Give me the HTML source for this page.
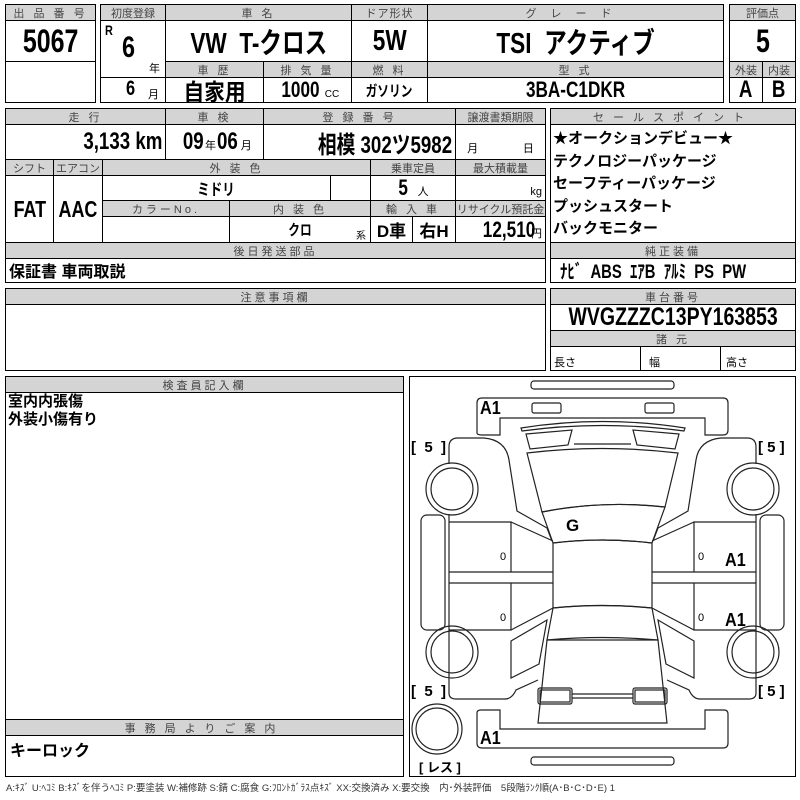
<!DOCTYPE html>
<html><head><meta charset="utf-8"><style>
*{margin:0;padding:0;box-sizing:border-box}
body{width:800px;height:800px;background:#fff;position:relative;overflow:hidden;font-family:"Liberation Sans","Noto Sans CJK JP",sans-serif;color:#000}
.c{position:absolute;border:1px solid #000;display:flex;align-items:center;justify-content:center;white-space:nowrap;overflow:visible}
.h{background:#d4d4d4;font-size:11px;color:#444;letter-spacing:3px;height:17px}
.b{font-weight:bold}
.s{display:inline-block;transform:scaleX(.78);transform-origin:center}
.sr{display:inline-block;transform:scaleX(.78);transform-origin:right}
.sl{display:inline-block;transform:scaleX(.78);transform-origin:left}
.t{position:absolute;white-space:nowrap;font-weight:bold}
</style></head><body>
<div class="c h" style="left:5px;top:4px;width:91px">出 品 番 号</div>
<div class="c b" style="left:5px;top:20px;width:91px;height:42px;font-size:32px"><span class="s">5067</span></div>
<div class="c" style="left:5px;top:61px;width:91px;height:42px"></div>
<div class="c h" style="left:100px;top:4px;width:66px;letter-spacing:0">初度登録</div>
<div class="c h" style="left:165px;top:4px;width:187px">車 名</div>
<div class="c h" style="left:351px;top:4px;width:77px;letter-spacing:1px">ドア形状</div>
<div class="c h" style="left:427px;top:4px;width:297px;letter-spacing:14px">グレード</div>
<div class="c" style="left:100px;top:20px;width:66px;height:58px"></div>
<div class="t" style="left:105px;top:22px;font-size:14px"><span class="sl">R</span></div>
<div class="t" style="left:122px;top:31px;font-size:30px"><span class="sl">6</span></div>
<div class="t" style="left:149px;top:60px;font-size:11px;font-weight:normal">年</div>
<div class="c" style="left:100px;top:77px;width:66px;height:26px"></div>
<div class="t" style="left:126px;top:77px;font-size:21px"><span class="sl">6</span></div>
<div class="t" style="left:148px;top:86px;font-size:11px;font-weight:normal">月</div>
<div class="c b" style="left:165px;top:20px;width:187px;height:42px;font-size:29px"><span class="s">VW&nbsp;&nbsp;T-クロス</span></div>
<div class="c b" style="left:351px;top:20px;width:77px;height:42px;font-size:29px"><span class="s">5W</span></div>
<div class="c b" style="left:427px;top:20px;width:297px;height:42px;font-size:29px"><span class="s">TSI&nbsp;&nbsp;アクティブ</span></div>
<div class="c h" style="left:165px;top:61px;width:99px">車 歴</div>
<div class="c h" style="left:263px;top:61px;width:89px">排 気 量</div>
<div class="c h" style="left:351px;top:61px;width:77px">燃 料</div>
<div class="c h" style="left:427px;top:61px;width:297px">型 式</div>
<div class="c b" style="left:165px;top:77px;width:99px;height:26px;font-size:23px"><span class="s" style="transform:scaleX(.9)">自家用</span></div>
<div class="c b" style="left:263px;top:77px;width:89px;height:26px;font-size:22px"><span class="s">1000</span><span style="font-size:10px;font-weight:normal;margin-top:8px">CC</span></div>
<div class="c b" style="left:351px;top:77px;width:77px;height:26px;font-size:15px"><span class="s">ガソリン</span></div>
<div class="c b" style="left:427px;top:77px;width:297px;height:26px;font-size:22px"><span class="s">3BA-C1DKR</span></div>
<div class="c h" style="left:729px;top:4px;width:67px;letter-spacing:0">評価点</div>
<div class="c b" style="left:729px;top:20px;width:67px;height:42px;font-size:32px"><span class="s">5</span></div>
<div class="c h" style="left:729px;top:61px;width:34px;letter-spacing:0">外装</div>
<div class="c h" style="left:762px;top:61px;width:34px;letter-spacing:0">内装</div>
<div class="c b" style="left:729px;top:77px;width:34px;height:26px;font-size:24px"><span class="s">A</span></div>
<div class="c b" style="left:762px;top:77px;width:34px;height:26px;font-size:24px"><span class="s">B</span></div>
<div class="c h" style="left:5px;top:108px;width:161px">走 行</div>
<div class="c h" style="left:165px;top:108px;width:99px">車 検</div>
<div class="c h" style="left:263px;top:108px;width:193px">登 録 番 号</div>
<div class="c h" style="left:455px;top:108px;width:91px;letter-spacing:0">譲渡書類期限</div>
<div class="c b" style="left:5px;top:124px;width:161px;height:36px;font-size:24px;justify-content:flex-end;padding-right:3px"><span class="sr">3,133 km</span></div>
<div class="c b" style="left:165px;top:124px;width:99px;height:36px;font-size:24px"><span class="s" style="transform-origin:right">09</span><span style="font-size:11px;font-weight:normal;margin:6px 1px 0">年</span><span class="s" style="transform-origin:left">06</span><span style="font-size:11px;font-weight:normal;margin:6px 0 0 -3px">月</span></div>
<div class="c b" style="left:263px;top:124px;width:193px;height:36px;font-size:24px;justify-content:flex-end;padding-right:3px"><span class="sr">相模 302ツ5982</span></div>
<div class="c" style="left:455px;top:124px;width:91px;height:36px;font-size:11px;justify-content:space-around;padding-top:12px">月<span></span>日</div>
<div class="c h" style="left:5px;top:159px;width:49px;letter-spacing:0">シフト</div>
<div class="c h" style="left:53px;top:159px;width:50px;letter-spacing:0">エアコン</div>
<div class="c h" style="left:102px;top:159px;width:269px">外 装 色</div>
<div class="c h" style="left:370px;top:159px;width:86px;letter-spacing:0">乗車定員</div>
<div class="c h" style="left:455px;top:159px;width:91px;letter-spacing:0">最大積載量</div>
<div class="c b" style="left:5px;top:175px;width:49px;height:68px;font-size:23px"><span class="s">FAT</span></div>
<div class="c b" style="left:53px;top:175px;width:50px;height:68px;font-size:23px"><span class="s">AAC</span></div>
<div class="c b" style="left:102px;top:175px;width:229px;height:26px;font-size:16px"><span class="s">ミドリ</span></div>
<div class="c" style="left:330px;top:175px;width:41px;height:26px"></div>
<div class="c b" style="left:370px;top:175px;width:86px;height:26px;font-size:22px"><span class="s">5</span><span style="font-size:11px;font-weight:normal;margin:6px 0 0 8px">人</span></div>
<div class="c" style="left:455px;top:175px;width:91px;height:26px;font-size:11px;justify-content:flex-end;padding:8px 3px 0 0">kg</div>
<div class="c h" style="left:102px;top:200px;width:128px">カラーNo.</div>
<div class="c h" style="left:229px;top:200px;width:142px">内 装 色</div>
<div class="c h" style="left:370px;top:200px;width:86px">輸 入 車</div>
<div class="c h" style="left:455px;top:200px;width:91px;letter-spacing:0">リサイクル預託金</div>
<div class="c" style="left:102px;top:216px;width:128px;height:27px"></div>
<div class="c b" style="left:229px;top:216px;width:142px;height:27px;font-size:15px"><span class="s">クロ</span></div>
<div class="t" style="left:356px;top:227px;font-size:10px;font-weight:normal">系</div>
<div class="c b" style="left:370px;top:216px;width:43px;height:27px;font-size:17px">D車</div>
<div class="c b" style="left:412px;top:216px;width:44px;height:27px;font-size:17px">右H</div>
<div class="c b" style="left:455px;top:216px;width:91px;height:27px;font-size:22px;justify-content:flex-end;padding-right:3px"><span class="sr" style="margin-right:-4px">12,510</span><span style="font-size:11px;font-weight:normal;margin-top:6px">円</span></div>
<div class="c h" style="left:550px;top:108px;width:246px;letter-spacing:9px">セールスポイント</div>
<div class="c" style="left:550px;top:124px;width:246px;height:119px"></div>
<div class="t" style="left:553px;top:128px;font-size:15px;line-height:22.5px">★オークションデビュー★<br>テクノロジーパッケージ<br>セーフティーパッケージ<br>プッシュスタート<br>バックモニター</div>
<div class="c h" style="left:5px;top:242px;width:541px">後日発送部品</div>
<div class="c" style="left:5px;top:258px;width:541px;height:25px"></div>
<div class="t" style="left:9px;top:258px;font-size:16px">保証書 車両取説</div>
<div class="c h" style="left:550px;top:242px;width:246px">純正装備</div>
<div class="c" style="left:550px;top:258px;width:246px;height:25px"></div>
<div class="t" style="left:560px;top:257px;font-size:19px"><span class="sl">ﾅﾋﾞ&nbsp; ABS&nbsp; ｴｱB&nbsp; ｱﾙﾐ&nbsp; PS&nbsp; PW</span></div>
<div class="c h" style="left:5px;top:288px;width:541px">注意事項欄</div>
<div class="c" style="left:5px;top:304px;width:541px;height:67px"></div>
<div class="c h" style="left:550px;top:288px;width:246px">車台番号</div>
<div class="c b" style="left:550px;top:304px;width:246px;height:27px;font-size:25px"><span class="s">WVGZZZC13PY163853</span></div>
<div class="c h" style="left:550px;top:330px;width:246px">諸 元</div>
<div class="c" style="left:550px;top:346px;width:91px;height:25px;font-size:11px;justify-content:flex-start;padding:6px 0 0 3px">長さ</div>
<div class="c" style="left:640px;top:346px;width:81px;height:25px;font-size:11px;justify-content:flex-start;padding:6px 0 0 8px">幅</div>
<div class="c" style="left:720px;top:346px;width:76px;height:25px;font-size:11px;justify-content:flex-start;padding:6px 0 0 5px">高さ</div>
<div class="c h" style="left:5px;top:376px;width:399px">検査員記入欄</div>
<div class="c" style="left:5px;top:392px;width:399px;height:328px"></div>
<div class="t" style="left:8px;top:393px;font-size:15px;line-height:18px">室内内張傷<br>外装小傷有り</div>
<div class="c h" style="left:5px;top:719px;width:399px;letter-spacing:9px">事務局よりご案内</div>
<div class="c" style="left:5px;top:735px;width:399px;height:42px"></div>
<div class="t" style="left:10px;top:737px;font-size:16px">キーロック</div>
<div class="c" style="left:409px;top:376px;width:387px;height:401px"></div>
<svg style="position:absolute;left:0;top:0" width="800" height="800" viewBox="0 0 800 800" fill="none" stroke="#222" stroke-width="1.2">
<rect x="531" y="381" width="143" height="8" rx="3"/>
<rect x="531" y="757" width="143" height="8" rx="3"/>
<path d="M477,433 L477,403 Q477,398 482,398 L723,398 Q728,398 728,403 L728,430 Q728,435 723,435 L705,435 L705,418 L500,418 L500,435 L482,435 Q477,435 477,433Z"/>
<rect x="532" y="403" width="29" height="10" rx="2"/>
<rect x="645" y="403" width="29" height="10" rx="2"/>
<path d="M477,713 Q477,710 481,710 L500,710 L500,729 L705,729 L705,710 L724,710 Q728,710 728,714 L728,743 Q728,748 723,748 L482,748 Q477,748 477,743Z"/>
<path d="M521,428 Q602,415 685,428 L684,431 Q602,420 522,431Z"/>
<path d="M526,434 L572,430 L568,445 L530,449Z"/>
<path d="M679,434 L633,430 L637,445 L675,449Z"/>
<path d="M574,444 L631,444"/>
<path d="M527,453 Q602,444 678,453 L665,507 Q602,500 542,512Z"/>
<path d="M542,512 Q602,500 665,507 L652,543 Q602,537 553,543Z"/>
<path d="M553,543 Q602,537 652,543 L652,608 Q602,603 553,608Z"/>
<path d="M553,608 Q602,603 652,608 L658,640 Q602,635 547,640Z"/>
<path d="M547,640 L658,640 L667,723 L538,723Z"/>
<rect x="538" y="688" width="34" height="16" rx="2"/><rect x="540" y="690" width="30" height="12"/>
<rect x="633" y="688" width="34" height="16" rx="2"/><rect x="635" y="690" width="30" height="12"/>
<path d="M572,694 L633,694 M572,698 L633,698"/>
<g id="side">
<path d="M449,464 L449,447 Q449,438 458,438 L484,438 Q506,440 509,460 L517,511 L547,528 L552,541"/>
<path d="M449,514 L449,678 M449,678 L449,693 Q449,699 456,699 L505,699 Q512,699 516,690 L538,680"/>
<circle cx="452" cy="489" r="26"/><circle cx="452" cy="489" r="21"/>
<circle cx="452" cy="652" r="26"/><circle cx="452" cy="652" r="21"/>
<rect x="421" y="515" width="24" height="115" rx="6"/>
<path d="M449,522 L511,522 L511,572 M449,572 L553,572 M449,583 L553,583 M511,583 L511,630 L449,630 M511,522 L553,541 M511,630 L553,608 M511,641 L547,620 L539,664 L511,678Z"/>
</g>
<use href="#side" transform="translate(1205,0) scale(-1,1)"/>
<circle cx="437" cy="729" r="25"/><circle cx="437" cy="729" r="21"/>
</svg>
<div style="position:absolute;left:0;top:0;font-weight:bold">
<span class="t" style="left:480px;top:398px;font-size:18px"><span class="sl" style="transform:scaleX(.9)">A1</span></span>
<span class="t" style="left:725px;top:550px;font-size:18px"><span class="sl" style="transform:scaleX(.9)">A1</span></span>
<span class="t" style="left:725px;top:610px;font-size:18px"><span class="sl" style="transform:scaleX(.9)">A1</span></span>
<span class="t" style="left:480px;top:728px;font-size:18px"><span class="sl" style="transform:scaleX(.9)">A1</span></span>
<span class="t" style="left:566px;top:516px;font-size:17px">G</span>
<span class="t" style="left:411px;top:439px;font-size:15px">[&nbsp; 5 &nbsp;]</span>
<span class="t" style="left:758px;top:439px;font-size:15px">[&nbsp;5&nbsp;]</span>
<span class="t" style="left:411px;top:683px;font-size:15px">[&nbsp; 5 &nbsp;]</span>
<span class="t" style="left:758px;top:683px;font-size:15px">[&nbsp;5&nbsp;]</span>
<span class="t" style="left:419px;top:757px;font-size:13px">[ レス ]</span>
<span class="t" style="left:500px;top:551px;font-size:11px;font-weight:normal">0</span>
<span class="t" style="left:500px;top:612px;font-size:11px;font-weight:normal">0</span>
<span class="t" style="left:698px;top:551px;font-size:11px;font-weight:normal">0</span>
<span class="t" style="left:698px;top:612px;font-size:11px;font-weight:normal">0</span>
</div>
<div class="t" style="left:6px;top:780px;font-size:9.5px;font-weight:normal;color:#333">A:ｷｽﾞ U:ﾍｺﾐ B:ｷｽﾞを伴うﾍｺﾐ P:要塗装 W:補修跡 S:錆 C:腐食 G:ﾌﾛﾝﾄｶﾞﾗｽ点ｷｽﾞ XX:交換済み X:要交換　内･外装評価　5段階ﾗﾝｸ順(A･B･C･D･E) 1</div>
</body></html>
